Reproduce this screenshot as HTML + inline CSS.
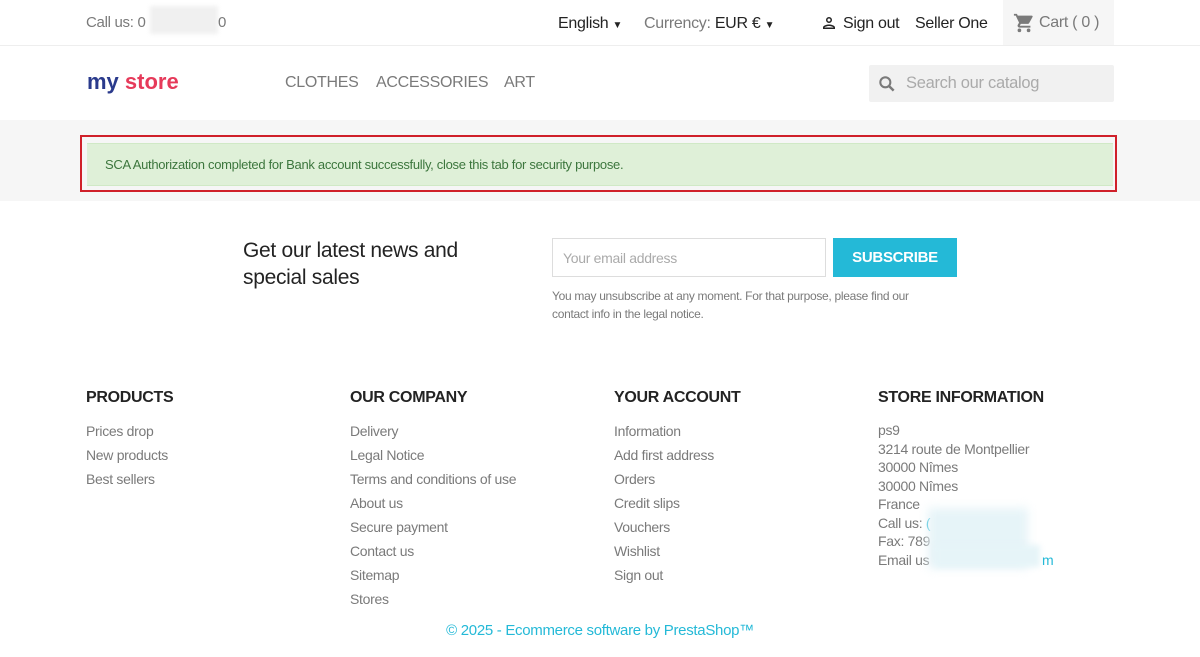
<!DOCTYPE html>
<html><head><meta charset="utf-8"><style>
*{margin:0;padding:0;box-sizing:border-box}
body{width:1200px;height:657px;overflow:hidden;background:#fff;font-family:"Liberation Sans",sans-serif;color:#7a7a7a;letter-spacing:-0.3px;position:relative}
.a{position:absolute;white-space:nowrap}
.top{position:absolute;left:0;top:0;width:1200px;height:46px;border-bottom:1px solid #eee;background:#fff}
.hdr{position:absolute;left:0;top:46px;width:1200px;height:74px;background:#fff;box-shadow:0 2px 3px rgba(0,0,0,.08)}
.gray{position:absolute;left:0;top:120px;width:1200px;height:81px;background:#f6f6f6}
.nav{font-size:16px;color:#7a7a7a;top:74px}
.h{font-size:16px;font-weight:bold;color:#232323;top:389px}
.l{font-size:14px;color:#7a7a7a;line-height:24px}
.s{font-size:14px;color:#7a7a7a;line-height:18.5px}
</style></head><body>
<div class="top"></div>
<div class="a" style="left:86px;top:14px;font-size:15px">Call us: 0</div>
<div class="a" style="left:150px;top:6px;width:68px;height:28px;background:#f0f0f0;filter:blur(2px)"></div>
<div class="a" style="left:218px;top:14px;font-size:15px">0</div>
<div class="a" style="left:558px;top:15px;font-size:16px;color:#232323">English <span style="font-size:10px">▼</span></div>
<div class="a" style="left:644px;top:15px;font-size:16px">Currency: <span style="color:#232323">EUR € <span style="font-size:10px">▼</span></span></div>
<svg class="a" style="left:820px;top:14px" width="18" height="18" viewBox="0 0 24 24"><path d="M12 4a4 4 0 1 1 0 8a4 4 0 1 1 0-8zm0 2a2 2 0 1 0 0 4a2 2 0 1 0 0-4zM4 20v-2c0-2.7 5.3-4 8-4s8 1.3 8 4v2zm2-2h12c-.3-.8-3.4-2-6-2s-5.700 1.2-6 2z" fill="#232323"/></svg>
<div class="a" style="left:843px;top:15px;font-size:16px;color:#232323">Sign out</div>
<div class="a" style="left:915px;top:15px;font-size:16px;color:#232323">Seller One</div>
<div class="a" style="left:1003px;top:0;width:111px;height:45px;background:#f6f6f6"></div>
<svg class="a" style="left:1013px;top:12px" width="22" height="22" viewBox="0 0 24 24"><path d="M7 18a2 2 0 1 0 0 4a2 2 0 1 0 0-4zM1 2v2h2l3.6 7.6-1.4 2.4c-.7 1.3.3 3 1.800 3h12v-2H7.4l1.1-2h7.5c.8 0 1.4-.4 1.7-1l3.6-6.5A1 1 0 0 0 20.4 4H5.2L4.3 2zm16 16a2 2 0 1 0 0 4a2 2 0 1 0 0-4z" fill="#7a7a7a"/></svg>
<div class="a" style="left:1039px;top:14px;font-size:16px">Cart ( 0 )</div>
<div class="hdr"></div>
<div class="a" style="left:87px;top:69px;font-size:22px;font-weight:bold;letter-spacing:0"><span style="color:#2a3a8c">my</span> <span style="color:#e63a5a">store</span></div>
<div class="a nav" style="left:285px">CLOTHES</div>
<div class="a nav" style="left:376px">ACCESSORIES</div>
<div class="a nav" style="left:504px">ART</div>
<div class="a" style="left:869px;top:65px;width:245px;height:37px;background:#f1f1f1;border-radius:2px"></div>
<svg class="a" style="left:877px;top:74px" width="20" height="20" viewBox="0 0 24 24"><circle cx="10" cy="10" r="6" stroke="#7a7a7a" stroke-width="2.5" fill="none"/><path d="M14.5 14.5L20 20" stroke="#7a7a7a" stroke-width="3"/></svg>
<div class="a" style="left:906px;top:74px;font-size:16.5px;color:#aaa">Search our catalog</div>
<div class="gray"></div>
<div class="a" style="left:80px;top:135px;width:1037px;height:57px;border:2px solid #d0202a"></div>
<div class="a" style="left:87px;top:143px;width:1026px;height:43px;background:#dff0d8;border-top:1px solid #d0e9c6;border-bottom:1px solid #d0e9c6"></div>
<div class="a" style="left:105px;top:157px;font-size:13px;color:#3c763d">SCA Authorization completed for Bank account successfully, close this tab for security purpose.</div>
<div class="a" style="left:243px;top:237px;font-size:21px;color:#232323;line-height:27px;white-space:normal;width:260px">Get our latest news and special sales</div>
<div class="a" style="left:552px;top:238px;width:274px;height:39px;border:1px solid #ddd;padding:11px 10px;font-size:14px;color:#aaa">Your email address</div>
<div class="a" style="left:833px;top:238px;width:124px;height:39px;background:#24b9d7;color:#fff;font-size:15px;font-weight:bold;text-align:center;line-height:39px">SUBSCRIBE</div>
<div class="a" style="left:552px;top:287px;font-size:12px;line-height:18px;white-space:normal;width:385px">You may unsubscribe at any moment. For that purpose, please find our contact info in the legal notice.</div>
<div class="a h" style="left:86px">PRODUCTS</div>
<div class="a h" style="left:350px">OUR COMPANY</div>
<div class="a h" style="left:614px">YOUR ACCOUNT</div>
<div class="a h" style="left:878px">STORE INFORMATION</div>
<div class="a l" style="left:86px;top:419px">Prices drop<br>New products<br>Best sellers</div>
<div class="a l" style="left:350px;top:419px">Delivery<br>Legal Notice<br>Terms and conditions of use<br>About us<br>Secure payment<br>Contact us<br>Sitemap<br>Stores</div>
<div class="a l" style="left:614px;top:419px">Information<br>Add first address<br>Orders<br>Credit slips<br>Vouchers<br>Wishlist<br>Sign out</div>
<div class="a s" style="left:878px;top:421px">ps9<br>3214 route de Montpellier<br>30000 Nîmes<br>30000 Nîmes<br>France<br>Call us: <span style="color:#24b9d7">(</span><br>Fax: 789<br>Email us</div>
<div class="a" style="left:928px;top:508px;width:100px;height:60px;background:#e6f4f8;filter:blur(5px)"></div>
<div class="a" style="left:935px;top:545px;width:105px;height:22px;background:#e6f4f8;filter:blur(3px)"></div>
<div class="a s" style="left:1042px;top:551px;color:#24b9d7">m</div>
<div class="a" style="left:0;width:1200px;text-align:center;top:622px;font-size:15px;color:#24b9d7">© 2025 - Ecommerce software by PrestaShop™</div>
</body></html>
